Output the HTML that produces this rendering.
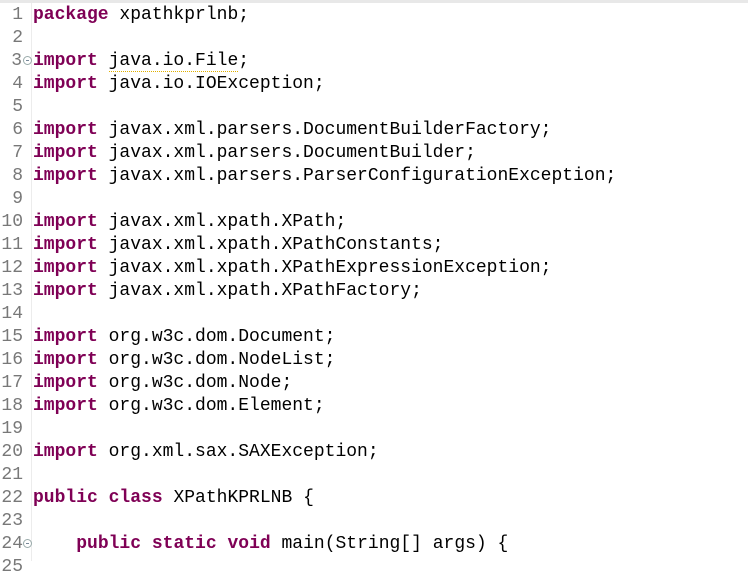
<!DOCTYPE html>
<html><head><meta charset="utf-8"><style>
body{margin:0;width:748px;height:561px;overflow:hidden;background:#fff;position:relative;font-family:"Liberation Mono",monospace;font-size:18px;letter-spacing:0}
.top{position:absolute;left:0;top:0;width:748px;height:3px;background:#e8e8e8}
.gut{position:absolute;left:31px;top:3px;width:1px;height:558px;background:#ececec}
.ln{position:absolute;left:0;width:23px;text-align:right;color:#787878;line-height:23px;height:23px}
.cd{position:absolute;left:33px;color:#000;line-height:23px;height:23px;white-space:pre}
b{color:#7f0055}
.fold{position:absolute;left:23px;width:7px;height:7px;border:1px solid #9aa;border-radius:50%;font-size:0}
.fold:after{content:"";position:absolute;left:2px;top:3px;width:3px;height:1px;background:#789}
.sq{border-bottom:1px dotted #e0b000}
</style></head><body>
<div class="top"></div><div class="gut"></div>
<div class="ln" style="top:4px">1</div><div class="cd" style="top:4px"><b>package</b> xpathkprlnb;</div>
<div class="ln" style="top:27px">2</div>
<div class="ln" style="top:50px;width:22px">3</div><div class="fold" style="top:56px"></div><div class="cd" style="top:50px"><b>import</b> <span class="sq">java.io.File</span>;</div>
<div class="ln" style="top:73px">4</div><div class="cd" style="top:73px"><b>import</b> java.io.IOException;</div>
<div class="ln" style="top:96px">5</div>
<div class="ln" style="top:119px">6</div><div class="cd" style="top:119px"><b>import</b> javax.xml.parsers.DocumentBuilderFactory;</div>
<div class="ln" style="top:142px">7</div><div class="cd" style="top:142px"><b>import</b> javax.xml.parsers.DocumentBuilder;</div>
<div class="ln" style="top:165px">8</div><div class="cd" style="top:165px"><b>import</b> javax.xml.parsers.ParserConfigurationException;</div>
<div class="ln" style="top:188px">9</div>
<div class="ln" style="top:211px">10</div><div class="cd" style="top:211px"><b>import</b> javax.xml.xpath.XPath;</div>
<div class="ln" style="top:234px">11</div><div class="cd" style="top:234px"><b>import</b> javax.xml.xpath.XPathConstants;</div>
<div class="ln" style="top:257px">12</div><div class="cd" style="top:257px"><b>import</b> javax.xml.xpath.XPathExpressionException;</div>
<div class="ln" style="top:280px">13</div><div class="cd" style="top:280px"><b>import</b> javax.xml.xpath.XPathFactory;</div>
<div class="ln" style="top:303px">14</div>
<div class="ln" style="top:326px">15</div><div class="cd" style="top:326px"><b>import</b> org.w3c.dom.Document;</div>
<div class="ln" style="top:349px">16</div><div class="cd" style="top:349px"><b>import</b> org.w3c.dom.NodeList;</div>
<div class="ln" style="top:372px">17</div><div class="cd" style="top:372px"><b>import</b> org.w3c.dom.Node;</div>
<div class="ln" style="top:395px">18</div><div class="cd" style="top:395px"><b>import</b> org.w3c.dom.Element;</div>
<div class="ln" style="top:418px">19</div>
<div class="ln" style="top:441px">20</div><div class="cd" style="top:441px"><b>import</b> org.xml.sax.SAXException;</div>
<div class="ln" style="top:464px">21</div>
<div class="ln" style="top:487px">22</div><div class="cd" style="top:487px"><b>public</b> <b>class</b> XPathKPRLNB {</div>
<div class="ln" style="top:510px">23</div>
<div class="ln" style="top:533px">24</div><div class="fold" style="top:539px"></div><div class="cd" style="top:533px">    <b>public</b> <b>static</b> <b>void</b> main(String[] args) {</div>
<div class="ln" style="top:556px">25</div>
</body></html>
